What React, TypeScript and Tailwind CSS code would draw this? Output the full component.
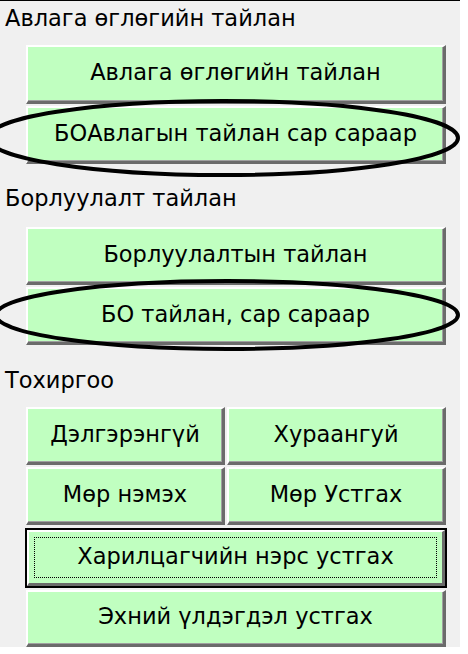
import React from 'react';

// 3D Windows Forms style button
const btnBase =
  'flex items-center justify-center pb-[4px] bg-[#c0ffc0] text-[22.5px] leading-[26px] text-black border-t-2 border-l-2 border-t-white border-l-white border-b-[3px] border-r-[3px] border-b-[#6b6b6b] border-r-[#6b6b6b] shadow-[inset_-1px_-1px_0_#a0a0a0]';

function Btn({ label, className }: { label: string; className: string }) {
  return <div className={`${btnBase} ${className}`}>{label}</div>;
}

function Heading({ label, className }: { label: string; className: string }) {
  return (
    <div className={`h-[26px] pl-[5px] text-[22.5px] leading-[26px] text-black ${className}`}>
      {label}
    </div>
  );
}

export default function App() {
  return (
    <div className="min-h-[654px] bg-white" style={{ fontFamily: '"DejaVu Sans", sans-serif' }}>
      <div className="relative flex h-[647px] w-[460px] flex-col border-t border-black bg-[#f0f0f0]">
        <Heading label="Авлага өглөгийн тайлан" className="mt-[4px]" />
        <Btn label="Авлага өглөгийн тайлан" className="ml-[26px] mt-[14px] h-[59px] w-[420px]" />
        <Btn label="БОАвлагын тайлан сар сараар" className="ml-[26px] mt-[2px] h-[58px] w-[420px]" />

        <Heading label="Борлуулалт тайлан" className="mt-[21px]" />
        <Btn label="Борлуулалтын тайлан" className="ml-[26px] mt-[16px] h-[58px] w-[420px]" />
        <Btn label="БО тайлан, сар сараар" className="ml-[26px] mt-[2px] h-[58px] w-[420px]" />

        <Heading label="Тохиргоо" className="mt-[22px]" />
        <div className="ml-[26px] mt-[14px] flex w-[420px] gap-[2px]">
          <Btn label="Дэлгэрэнгүй" className="h-[58px] w-[199px]" />
          <Btn label="Хураангуй" className="h-[58px] w-[219px]" />
        </div>
        <div className="ml-[26px] mt-[2px] flex w-[420px] gap-[2px]">
          <Btn label="Мөр нэмэх" className="h-[58px] w-[199px]" />
          <Btn label="Мөр Устгах" className="h-[58px] w-[219px]" />
        </div>

        {/* focused button: black frame + dotted focus rect */}
        <div className="ml-[25px] mt-[3px] h-[60px] w-[422px] border-2 border-black">
          <div className="flex h-full w-full items-center justify-center bg-[#c0ffc0] border-t-2 border-l-2 border-t-white border-l-white border-b-[3px] border-r-[3px] border-b-[#6b6b6b] border-r-[#6b6b6b] px-[5px] py-[5px]">
            <div className="flex h-full w-full items-center justify-center pb-[3px] border border-dotted border-black text-[22.5px] leading-[26px] text-black">
              Харилцагчийн нэрс устгах
            </div>
          </div>
        </div>
        <Btn label="Эхний үлдэгдэл устгах" className="ml-[26px] mt-[2px] h-[57px] w-[420px]" />

        {/* hand-drawn marks */}
        <svg
          className="pointer-events-none absolute left-0 top-0"
          width="468"
          height="654"
          viewBox="0 0 468 654"
        >
          <ellipse cx="223" cy="137" rx="235" ry="37" fill="none" stroke="black" strokeWidth="4" />
          <ellipse cx="227" cy="314" rx="231" ry="34" fill="none" stroke="black" strokeWidth="4" />
        </svg>
      </div>
    </div>
  );
}
